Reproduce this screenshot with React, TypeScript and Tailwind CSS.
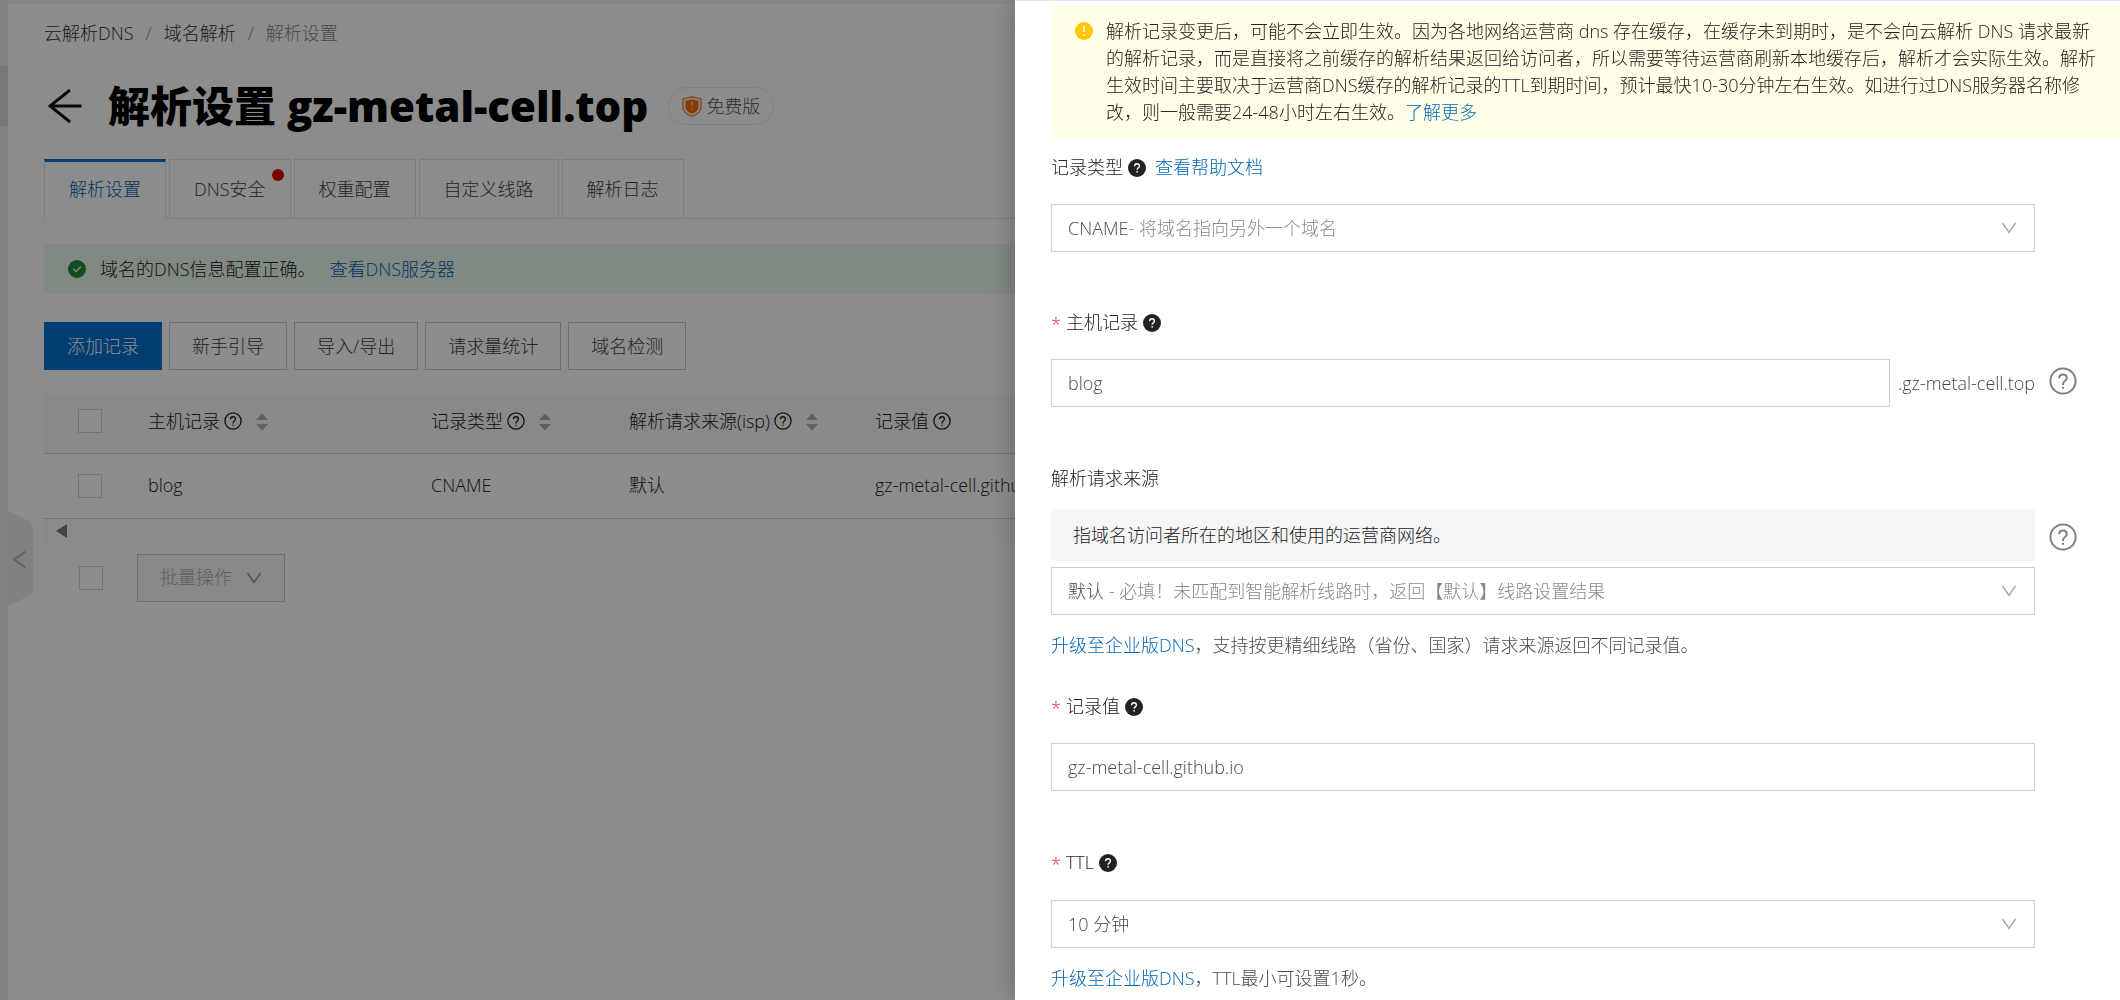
import type { ReactNode } from 'react'
import clsx from 'clsx'

const tabs = [
  { label: '解析设置', active: true },
  { label: 'DNS安全', dot: true },
  { label: '权重配置' },
  { label: '自定义线路' },
  { label: '解析日志' },
]

const actions = ['新手引导', '导入/导出', '请求量统计', '域名检测']

const columns = [
  { label: '主机记录', width: 'w-[283px]', sortable: true },
  { label: '记录类型', width: 'w-[198px]', sortable: true },
  { label: '解析请求来源(isp)', width: 'w-[246px]', sortable: true },
  { label: '记录值', width: '', sortable: false },
]

function HelpOutline({ className }: { className?: string }) {
  return (
    <svg viewBox="0 0 28 28" fill="none" stroke="currentColor" strokeWidth="2" className={clsx('shrink-0', className)} aria-hidden="true">
      <circle cx="14" cy="14" r="12.6" />
      <path d="M10.2 11.2c0-2.2 1.6-3.8 3.8-3.8s3.8 1.5 3.8 3.5c0 1.7-1 2.5-2.1 3.4-1.1.9-1.7 1.6-1.7 3v.7" />
      <path d="M14 19.8v2" />
    </svg>
  )
}

function HelpSolid() {
  return (
    <svg viewBox="0 0 18 18" className="size-[18px] shrink-0" aria-hidden="true">
      <circle cx="9" cy="9" r="9" fill="#222" />
      <path d="M6.6 7.2c0-1.5 1-2.4 2.4-2.4s2.4.9 2.4 2.2c0 1.9-2.3 1.9-2.3 3.7" fill="none" stroke="#fff" strokeWidth="1.4" />
      <circle cx="9.1" cy="12.8" r="0.9" fill="#fff" />
    </svg>
  )
}

function ChevronDown({ className }: { className?: string }) {
  return (
    <svg viewBox="0 0 16 12" fill="none" stroke="currentColor" strokeWidth="1.5" className={clsx('w-4 h-3 shrink-0', className)} aria-hidden="true">
      <path d="M1.5 1 8 10.5 14.5 1" />
    </svg>
  )
}

function SortArrows() {
  return (
    <svg viewBox="0 0 12 20" fill="#b0b0b0" className="ml-[10px] w-3 h-5 shrink-0" aria-hidden="true">
      <path d="M6 2.5 12 9H0zM6 19.5 0 13h12z" />
    </svg>
  )
}

function Checkbox({ label }: { label: string }) {
  return (
    <input
      type="checkbox"
      aria-label={label}
      className="block size-6 appearance-none border border-[#d0d0d0] bg-white checked:bg-[#0070cc]"
    />
  )
}

function FieldLabel({ htmlFor, required, help, children }: { htmlFor: string; required?: boolean; help?: boolean; children: ReactNode }) {
  return (
    <label htmlFor={htmlFor} className="flex h-[27px] items-center gap-[5px] leading-[27px] text-[#222]">
      {required && <span className="pt-1 text-[#d93026]">*</span>}
      {children}
      {help && <HelpSolid />}
    </label>
  )
}

/* Shows the option with its grey description, the native select lies on top */
function RichSelect({ id, value, hint }: { id: string; value: string; hint: string }) {
  return (
    <div className="relative flex h-12 items-center justify-between border border-[#d0d0d0] pl-4 pr-[17px] focus-within:border-[#0070cc]">
      <span className="text-[#888]">
        <span className="text-[#4a4a4a]">{value}</span>
        {hint}
      </span>
      <ChevronDown className="text-[#aaa]" />
      <select id={id} className="absolute inset-0 w-full cursor-pointer opacity-0">
        <option>{value}</option>
      </select>
    </div>
  )
}

function Console() {
  return (
    <div className="flex min-h-screen">
      <aside className="w-2 shrink-0 bg-[#efefef] pt-[66px]">
        <div className="h-[60px] bg-[#d9d9d9]" />
      </aside>

      <button aria-label="收起" className="absolute left-2 top-[511px] flex h-24 w-[25px] items-center justify-center">
        <svg viewBox="0 0 25 96" className="h-24 w-[25px]" aria-hidden="true">
          <path d="M0 0 19 9Q25 12 25 19V77Q25 82 20 85L0 96z" fill="#ececec" />
          <path d="M17.5 40.5 6 48.5 17.5 56.5" fill="none" stroke="#b4b4b4" strokeWidth="2" />
        </svg>
      </button>

      <main className="min-w-0 flex-1 border-t-4 border-[#f4f4f4] pl-9">
        <nav className="flex gap-3 pt-4 leading-[27px] text-[#333]">
          <a href="#">云解析DNS</a>
          <span className="text-[#888]">/</span>
          <a href="#">域名解析</a>
          <span className="text-[#888]">/</span>
          <span className="text-[#888]">解析设置</span>
        </nav>

        <div className="mt-[27px] flex h-16 items-center">
          <button aria-label="返回" className="ml-1 mr-[26px]">
            <svg viewBox="0 0 34 34" fill="none" stroke="#111" strokeWidth="3" className="size-[34px]" aria-hidden="true">
              <path d="M33.5 17H2M22 1 2 17 22 33" />
            </svg>
          </button>
          <h1 className="text-[42px] font-extrabold leading-[64px] text-black">解析设置 gz-metal-cell.top</h1>
          <span className="ml-5 flex h-[38px] items-center gap-1 rounded-full border border-[#ebebeb] px-[13px] text-[#555]">
            <svg viewBox="0 0 20 21" className="w-5 h-[21px]" aria-hidden="true">
              <path d="M10 .8 19 3v8c0 4.5-4.5 7.8-9 9.3C5.5 18.8 1 15.5 1 11V3z" fill="#fff2e8" stroke="#f58a3c" strokeWidth="1.4" />
              <path d="M10 3.2 16.6 4.8v6.2c0 3.2-3.2 5.5-6.6 6.8-3.4-1.3-6.6-3.6-6.6-6.800V4.8z" fill="#f26f0c" />
              <path d="M10 6v4.5M10 12.5v1.5" stroke="#ffc08a" strokeWidth="1.6" />
            </svg>
            免费版
          </span>
        </div>

        <div role="tablist" className="mt-[21px] flex gap-[3px] border-b border-[#e3e4e6]">
          {tabs.map((tab) => (
            <button
              key={tab.label}
              role="tab"
              aria-selected={!!tab.active}
              className={clsx(
                'relative -mb-px h-[60px] border px-6',
                tab.active
                  ? 'border-x-[#e3e4e6] border-b-white border-t-[3px] border-t-[#0070cc] pb-[2px] text-[#0064b8]'
                  : 'border-[#e3e4e6] text-[#444]',
              )}
            >
              {tab.label}
              {tab.dot && <span className="absolute right-[6px] top-[9px] size-3 rounded-full bg-[#e00000]" />}
            </button>
          ))}
        </div>

        <div className="mt-[25px] flex h-[50px] items-center bg-[#ebf9ee] pl-6 text-[#222]">
          <svg viewBox="0 0 18 18" className="mr-[14px] size-[18px]" aria-hidden="true">
            <circle cx="9" cy="9" r="9" fill="#1e8e3e" />
            <path d="M5.2 8.8 8 11.6 13 6.4" fill="none" stroke="#d5f0dc" strokeWidth="1.5" />
          </svg>
          域名的DNS信息配置正确。
          <a href="#" className="ml-[14px] text-[#0064b8]">查看DNS服务器</a>
        </div>

        <div className="mt-7 flex gap-[6px]">
          <button className="h-12 border border-[#0070cc] bg-[#0070cc] px-[22px] text-white">添加记录</button>
          {actions.map((action) => (
            <button key={action} className="ml-px h-12 border border-[#c8c8c8] px-[22px] text-[#444]">{action}</button>
          ))}
        </div>

        <table className="mt-6 w-full table-fixed text-left text-[#222]">
          <thead>
            <tr className="h-[59px] border-b border-[#d2d2d2] bg-[#f9f9f9]">
              <th className="w-[104px] pb-1 pl-[34px]"><Checkbox label="全选" /></th>
              {columns.map((col) => (
                <th key={col.label} className={clsx('pb-1 font-light', col.width)}>
                  <span className="flex items-center gap-1">
                    {col.label}
                    <HelpOutline className="size-[18px]" />
                    {col.sortable && <SortArrows />}
                  </span>
                </th>
              ))}
            </tr>
          </thead>
          <tbody>
            <tr className="h-[65px] border-b border-[#d2d2d2]">
              <td className="pl-[34px]"><Checkbox label="选择 blog" /></td>
              <td>blog</td>
              <td>CNAME</td>
              <td>默认</td>
              <td>gz-metal-cell.github.io</td>
            </tr>
          </tbody>
        </table>

        <div className="flex h-6 items-center bg-[#fbfbfb] pl-3">
          <svg viewBox="0 0 12 14" className="w-3 h-[14px]" fill="#777" aria-hidden="true">
            <path d="M11 0v14L0 7z" />
          </svg>
        </div>

        <div className="mt-[11px] flex items-center pl-[35px]">
          <Checkbox label="选择全部" />
          <button disabled className="ml-[34px] flex h-12 items-center gap-[14px] border border-[#c8c8c8] bg-[#f7f7f7] px-[22px] text-[#b0b0b0]">
            批量操作
            <ChevronDown className="text-[#999]" />
          </button>
        </div>
      </main>
    </div>
  )
}

function RecordDrawer() {
  return (
    <section
      role="dialog"
      aria-label="修改记录"
      className="fixed inset-y-0 right-0 w-[1105px] max-w-full overflow-hidden border-t border-[#e5e5e5] bg-white pl-9 pt-[5px] shadow-[-4px_0_24px_rgba(0,0,0,0.2)]"
    >
      <div className="flex gap-[13px] bg-[#fffee6] py-3 pl-6 pr-5 leading-[27px] text-[#222]">
        <svg viewBox="0 0 18 18" className="mt-1 size-[18px] shrink-0" aria-hidden="true">
          <circle cx="9" cy="9" r="9" fill="#ffc60a" />
          <path d="M9 4v6M9 12v2" stroke="#fff" strokeWidth="1.5" />
        </svg>
        <p>
          解析记录变更后，可能不会立即生效。因为各地网络运营商 dns 存在缓存，在缓存未到期时，是不会向云解析 DNS 请求最新的解析记录，而是直接将之前缓存的解析结果返回给访问者，所以需要等待运营商刷新本地缓存后，解析才会实际生效。解析生效时间主要取决于运营商DNS缓存的解析记录的TTL到期时间，预计最快10-30分钟左右生效。如进行过DNS服务器名称修改，则一般需要24-48小时左右生效。
          <a href="#" className="text-[#0064b8]">了解更多</a>
        </p>
      </div>

      <form className="pr-[85px] text-[#4a4a4a]">
        <div className="mt-4">
          <div className="mb-[23px] flex gap-[9px]">
            <FieldLabel htmlFor="type" help>记录类型</FieldLabel>
            <a href="#" className="leading-[27px] text-[#0064b8]">查看帮助文档</a>
          </div>
          <RichSelect id="type" value="CNAME" hint="- 将域名指向另外一个域名" />
        </div>

        <div className="mt-[57px]">
          <FieldLabel htmlFor="host" required help>主机记录</FieldLabel>
          <div className="relative mt-[23px] flex items-center gap-2">
            <input id="host" defaultValue="blog" className="h-12 min-w-0 flex-1 border border-[#d0d0d0] px-4 outline-none focus:border-[#0070cc]" />
            <span>.gz-metal-cell.top</span>
            <HelpOutline className="absolute -right-[42px] top-2 size-7 text-[#808080]" />
          </div>
        </div>

        <div className="mt-[58px]">
          <FieldLabel htmlFor="line">解析请求来源</FieldLabel>
          <div className="relative mb-[6px] mt-[17px] flex h-[52px] items-center bg-[#f6f6f6] px-[22px] text-[#222]">
            指域名访问者所在的地区和使用的运营商网络。
            <HelpOutline className="absolute -right-[42px] top-[14px] size-7 text-[#808080]" />
          </div>
          <RichSelect id="line" value="默认" hint=" - 必填！未匹配到智能解析线路时，返回【默认】线路设置结果" />
          <p className="mt-[17px] leading-[27px]">
            <a href="#" className="text-[#0064b8]">升级至企业版DNS</a>，支持按更精细线路（省份、国家）请求来源返回不同记录值。
          </p>
        </div>

        <div className="mt-[34px]">
          <FieldLabel htmlFor="value" required help>记录值</FieldLabel>
          <input id="value" defaultValue="gz-metal-cell.github.io" className="mt-[23px] block h-12 w-full border border-[#d0d0d0] px-4 outline-none focus:border-[#0070cc]" />
        </div>

        <div className="mt-[58px]">
          <FieldLabel htmlFor="ttl" required help>TTL</FieldLabel>
          <div className="relative mt-6 flex items-center">
            <select id="ttl" className="h-12 w-full appearance-none border border-[#d0d0d0] bg-white px-4 outline-none focus:border-[#0070cc]">
              <option>10 分钟</option>
            </select>
            <ChevronDown className="pointer-events-none absolute right-[18px] text-[#aaa]" />
          </div>
          <p className="mt-[17px] leading-[27px]">
            <a href="#" className="text-[#0064b8]">升级至企业版DNS</a>，TTL最小可设置1秒。
          </p>
        </div>
      </form>
    </section>
  )
}

export default function App() {
  return (
    <div className="relative min-h-screen overflow-hidden bg-white font-['Open_Sans','Noto_Sans_CJK_SC',sans-serif] text-[18px] font-light">
      <Console />
      <div className="fixed inset-0 bg-black/45" />
      <RecordDrawer />
    </div>
  )
}
